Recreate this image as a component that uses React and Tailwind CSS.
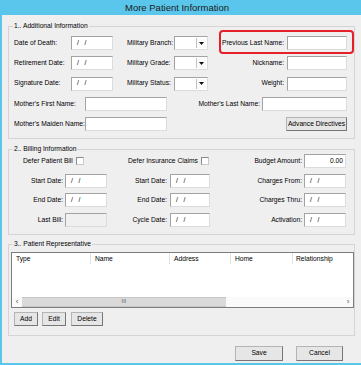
import React from "react";

// Small Win32-style form controls, scaled down to match the dialog

const Field = ({ w, value = "", disabled, right }) => (
  <div
    className={`h-[14px] ${w} shrink-0 border border-[#a3a3a3] border-r-[#dcdcdc] border-b-[#dcdcdc] ${
      disabled ? "bg-[#f0f0f0]" : "bg-white"
    } flex items-center whitespace-pre ${right ? "justify-end pr-[2px]" : "pl-[5px]"}`}
  >
    {value}
  </div>
);

const DateField = ({ w = "w-[42px]" }) => <Field w={w} value={"/   /"} />;

const Combo = () => (
  <div className="h-[14px] w-[34px] shrink-0 border border-[#a3a3a3] border-r-[#dcdcdc] border-b-[#dcdcdc] bg-white flex justify-end p-px">
    <div className="w-[10px] h-full border-l border-[#c4c4c4] bg-[#fbfbfb] flex items-center justify-center">
      <svg width="5" height="3" viewBox="0 0 5 3">
        <path d="M0 0h5L2.5 3z" fill="#111" />
      </svg>
    </div>
  </div>
);

const Check = () => (
  <div className="w-[8px] h-[8px] shrink-0 border border-[#8a8a8a] border-r-[#c9c9c9] border-b-[#c9c9c9] bg-white" />
);

const Btn = ({ w, h = "h-[14px]", children }) => (
  <button
    className={`${w} ${h} shrink-0 border border-[#b4b4b4] border-r-[#767676] border-b-[#767676] bg-[#e6e6e6] flex items-center justify-center leading-none`}
  >
    {children}
  </button>
);

const Label = ({ w, right, className = "", children }) => (
  <span className={`${w} shrink-0 whitespace-nowrap ${right ? "text-right pr-[2px]" : ""} ${className}`}>
    {children}
  </span>
);

const Group = ({ title, className = "", children }) => (
  <div className={`relative border border-[#d4d4d4] ${className}`}>
    <span className="absolute left-[4px] -top-[6px] bg-[#f0eff0] px-px leading-[10px] whitespace-nowrap">
      {title}
    </span>
    {children}
  </div>
);

const columns = [
  { name: "Type", w: "w-[79px]" },
  { name: "Name", w: "w-[79px]" },
  { name: "Address", w: "w-[61px]" },
  { name: "Home", w: "w-[62px]" },
];

export default function App() {
  return (
    <div className="w-[361px] h-[365px] bg-[#f0eff0] border-l-2 border-b-2 border-[#5bc6ec] flex flex-col overflow-hidden font-['Liberation_Sans',Arial,sans-serif] text-[6.7px] text-black">
      {/* Title bar */}
      <div className="h-[15px] w-[361px] -ml-[2px] shrink-0 bg-[#5bc6ec] pr-[7px] text-center text-[9.5px] leading-[15px] text-[#1b1b1b]">
        More Patient Information
      </div>

      <div className="flex-1 pl-[6px] flex flex-col">
        {/* 1. Additional Information */}
        <Group title="1.. Additional Information" className="w-[347px] mt-[11px] pt-[9px] pb-[7px] pl-[5px] pr-[7px] flex flex-col gap-[6.25px]">
          <div className="flex items-center h-[14px]">
            <Label w="w-[57px]">Date of Death:</Label>
            <DateField />
            <Label w="w-[61px]" className="pl-[14px]">Military Branch:</Label>
            <Combo />
            <div className="relative flex items-center">
              <Label w="w-[79px]" right className="pr-[3px]">Previous Last Name:</Label>
              <Field w="w-[60px]" />
              <span className="absolute left-[11px] -right-[7px] -top-[6px] -bottom-[4px] border-2 border-[#e5202a] rounded-[4px] pointer-events-none" />
            </div>
          </div>
          <div className="flex items-center h-[14px]">
            <Label w="w-[57px]">Retirement Date:</Label>
            <DateField />
            <Label w="w-[61px]" className="pl-[14px]">Military Grade:</Label>
            <Combo />
            <Label w="w-[79px]" right className="pr-[3px]">Nickname:</Label>
            <Field w="w-[60px]" />
          </div>
          <div className="flex items-center h-[14px]">
            <Label w="w-[57px]">Signature Date:</Label>
            <DateField />
            <Label w="w-[61px]" className="pl-[14px]">Military Status:</Label>
            <Combo />
            <Label w="w-[79px]" right className="pr-[3px]">Weight:</Label>
            <Field w="w-[60px]" />
          </div>
          <div className="flex items-center h-[14px]">
            <Label w="w-[71px]">Mother's First Name:</Label>
            <Field w="w-[82px]" />
            <Label w="w-[95px]" right>Mother's Last Name:</Label>
            <Field w="w-[85px]" />
          </div>
          <div className="flex items-center h-[14px]">
            <Label w="w-[71px]">Mother's Maiden Name:</Label>
            <Field w="w-[82px]" />
            <div className="ml-auto">
              <Btn w="w-[61px]">Advance Directives</Btn>
            </div>
          </div>
        </Group>

        {/* 2. Billing Information */}
        <Group title="2.. Billing Information" className="w-[347px] mt-[10px] pt-[4px] pb-[7px] pr-[8px] flex flex-col gap-[5.7px]">
          <div className="flex items-center h-[14px]">
            <div className="w-[103px] pl-[14px] flex items-center">
              <span className="whitespace-nowrap">Defer Patient Bill</span>
              <div className="ml-[3px]"><Check /></div>
            </div>
            <div className="w-[103px] pl-[16px] flex items-center">
              <span className="whitespace-nowrap">Defer Insurance Claims</span>
              <div className="ml-[3px]"><Check /></div>
            </div>
            <Label w="flex-1" right>Budget Amount:</Label>
            <Field w="w-[42px]" value="0.00" right />
          </div>
          {[
            ["Start Date:", "Start Date:", "Charges From:"],
            ["End Date:", "End Date:", "Charges Thru:"],
            ["Last Bill:", "Cycle Date:", "Activation:"],
          ].map(([a, b, c], i) => (
            <div key={i} className="flex items-center h-[14px]">
              <Label w="w-[56px]" right>{a}</Label>
              {i === 2 ? <Field w="w-[42px]" disabled /> : <DateField />}
              <Label w="w-[63px]" right className="pr-[3px]">{b}</Label>
              <DateField w="w-[40px]" />
              <Label w="flex-1" right>{c}</Label>
              <DateField />
            </div>
          ))}
        </Group>

        {/* 3. Patient Representative */}
        <Group title="3.. Patient Representative" className="w-[347px] mt-[9px] pt-[7px] pb-[9px] pl-[2px]">
          <div className="w-[343px] h-[56px] border border-[#7c7c7c] bg-white flex flex-col">
            <div className="h-[11px] flex shrink-0">
              {columns.map((c) => (
                <div key={c.name} className={`${c.w} h-full border-r border-[#e3e3e3] pl-[4px] flex items-center`}>
                  {c.name}
                </div>
              ))}
              <div className="flex-1 pl-[3px] flex items-center">Relationship</div>
            </div>
            <div className="flex-1" />
            <div className="h-[10px] flex shrink-0 bg-[#fafafa] text-[#505050]">
              <div className="w-[10px] flex items-center justify-center text-[8px] leading-none">&lsaquo;</div>
              <div className="w-[204px] bg-[#dadada] border-y border-[#c6c6c6] flex items-center justify-center text-[5px] tracking-[0.3px] text-[#444]">
                III
              </div>
              <div className="flex-1" />
              <div className="w-[10px] flex items-center justify-center text-[8px] leading-none">&rsaquo;</div>
            </div>
          </div>
          <div className="flex mt-[4px] ml-[3px] gap-[4px]">
            <Btn w="w-[24px]">Add</Btn>
            <Btn w="w-[24px]">Edit</Btn>
            <div className="ml-px">
              <Btn w="w-[32px]">Delete</Btn>
            </div>
          </div>
        </Group>

        {/* Dialog buttons */}
        <div className="mt-[10px] w-[347px] flex justify-end gap-[13px] pr-[12px]">
          <Btn w="w-[48px]" h="h-[15px]">Save</Btn>
          <Btn w="w-[47px]" h="h-[15px]">Cancel</Btn>
        </div>
      </div>
    </div>
  );
}
